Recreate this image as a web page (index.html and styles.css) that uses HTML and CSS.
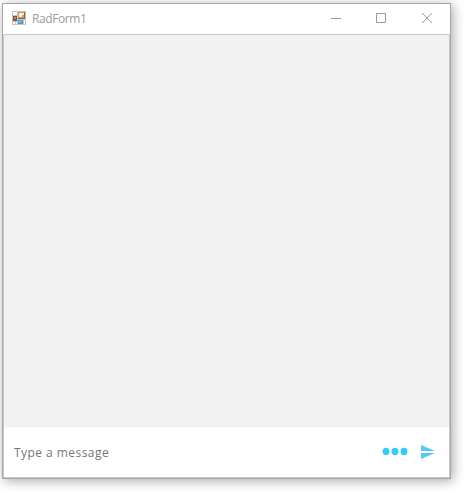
FILE: index.html
```html
<!DOCTYPE html>
<html lang="en">
<head>
<meta charset="utf-8">
<title>RadForm1</title>
<link rel="stylesheet" href="styles.css">
</head>
<body>
<main class="window">
  <header class="titlebar">
    <svg class="app-icon" width="14" height="14" viewBox="0 0 14 14" shape-rendering="crispEdges">
      <path fill="#c3c5c7" d="M0 0h14v14H0z"/>
      <path fill="#fff" d="M1 1h4v3H1zM1 11h2v2H1zM4 11h1v2H4zM12 9h1v4h-1z"/>
      <path fill="#80543d" d="M1 5h4v5H1z"/>
      <path fill="#b58a70" d="M2 6h2v2H2z"/>
      <path fill="#93603c" d="M6 1h7v7H6z"/>
      <path fill="#c99c6d" d="M6 1h6v6H6z"/>
      <path fill="#fff1d5" d="M7 2h5v2h-2v2H7z"/>
      <path fill="#4b9bd0" d="M6 9h5v4H6z"/>
      <path fill="#85c6ed" d="M7 10h3v1H8v1H7z"/>
    </svg>
    <h1 class="title">RadForm1</h1>
    <div class="controls">
      <svg class="minimize" width="10" height="10" viewBox="0 0 10 10"><path d="M0 5.5h10"/></svg>
      <svg class="maximize" width="10" height="10" viewBox="0 0 10 10"><path d="M.5.5h9v9h-9z"/></svg>
      <svg width="10" height="10" viewBox="0 0 10 10"><path d="M0 0l10 10M10 0L0 10"/></svg>
    </div>
  </header>
  <section class="chat">
    <div class="messages"></div>
    <footer class="composer">
      <span class="placeholder">Type a message</span>
      <svg class="more" width="26" height="8" viewBox="0 0 26 8"><ellipse cx="4" cy="4.4" rx="3.4" ry="3.6"/><ellipse cx="13" cy="4.4" rx="3.4" ry="3.6"/><ellipse cx="22" cy="4.4" rx="3.4" ry="3.6"/></svg>
      <svg class="send" width="14" height="14" viewBox="0 0 14 14"><path d="M0 0L14 6H0zM0 8h14L0 14z"/></svg>
    </footer>
  </section>
</main>
</body>
</html>
```
FILE: styles.css
```css
* { box-sizing: border-box; }
body {
  margin: 0;
  height: 494px;
  padding: 3px 0 0 2px;
  overflow: hidden;
  background: #fff;
  font-family: "Open Sans", "Noto Sans", sans-serif;
}
.window {
  display: flex;
  flex-direction: column;
  width: 449px;
  height: 476px;
  border: 1px solid #a6a6a6;
  background: #fff;
  box-shadow: 2px 2px 11px rgba(0, 0, 0, .34);
}
.titlebar {
  display: flex;
  align-items: center;
  height: 30px;
  padding: 0 18px 0 9px;
}
.app-icon { display: block; margin-bottom: 2px; }
.title {
  margin: 0 auto 0 6px;
  color: #a09a9a;
  font-size: 12px;
  font-weight: 400;
  line-height: 16px;
  letter-spacing: -.42px;
}
.controls { display: flex; margin-bottom: 2px; }
.controls svg {
  display: block;
  fill: none;
  stroke: #a09799;
  stroke-width: 1;
}
.controls .minimize { margin-right: 35px; }
.controls .maximize { margin-right: 36px; }
.chat {
  display: flex;
  flex: 1;
  flex-direction: column;
  border: 1px solid #c8c8c8;
}
.messages { flex: 1; background: #f1f1f1; }
.composer {
  display: flex;
  align-items: center;
  height: 50px;
  padding: 0 14px 0 10px;
  border-top: 1px solid #fafafa;
}
.placeholder {
  margin-right: auto;
  color: #767676;
  font-size: 12px;
  line-height: 18px;
  letter-spacing: .45px;
}
.more { margin: 0 13px 3px 0; fill: #30cdfa; }
.send { margin-bottom: 1px; fill: #55c8f2; }
```
